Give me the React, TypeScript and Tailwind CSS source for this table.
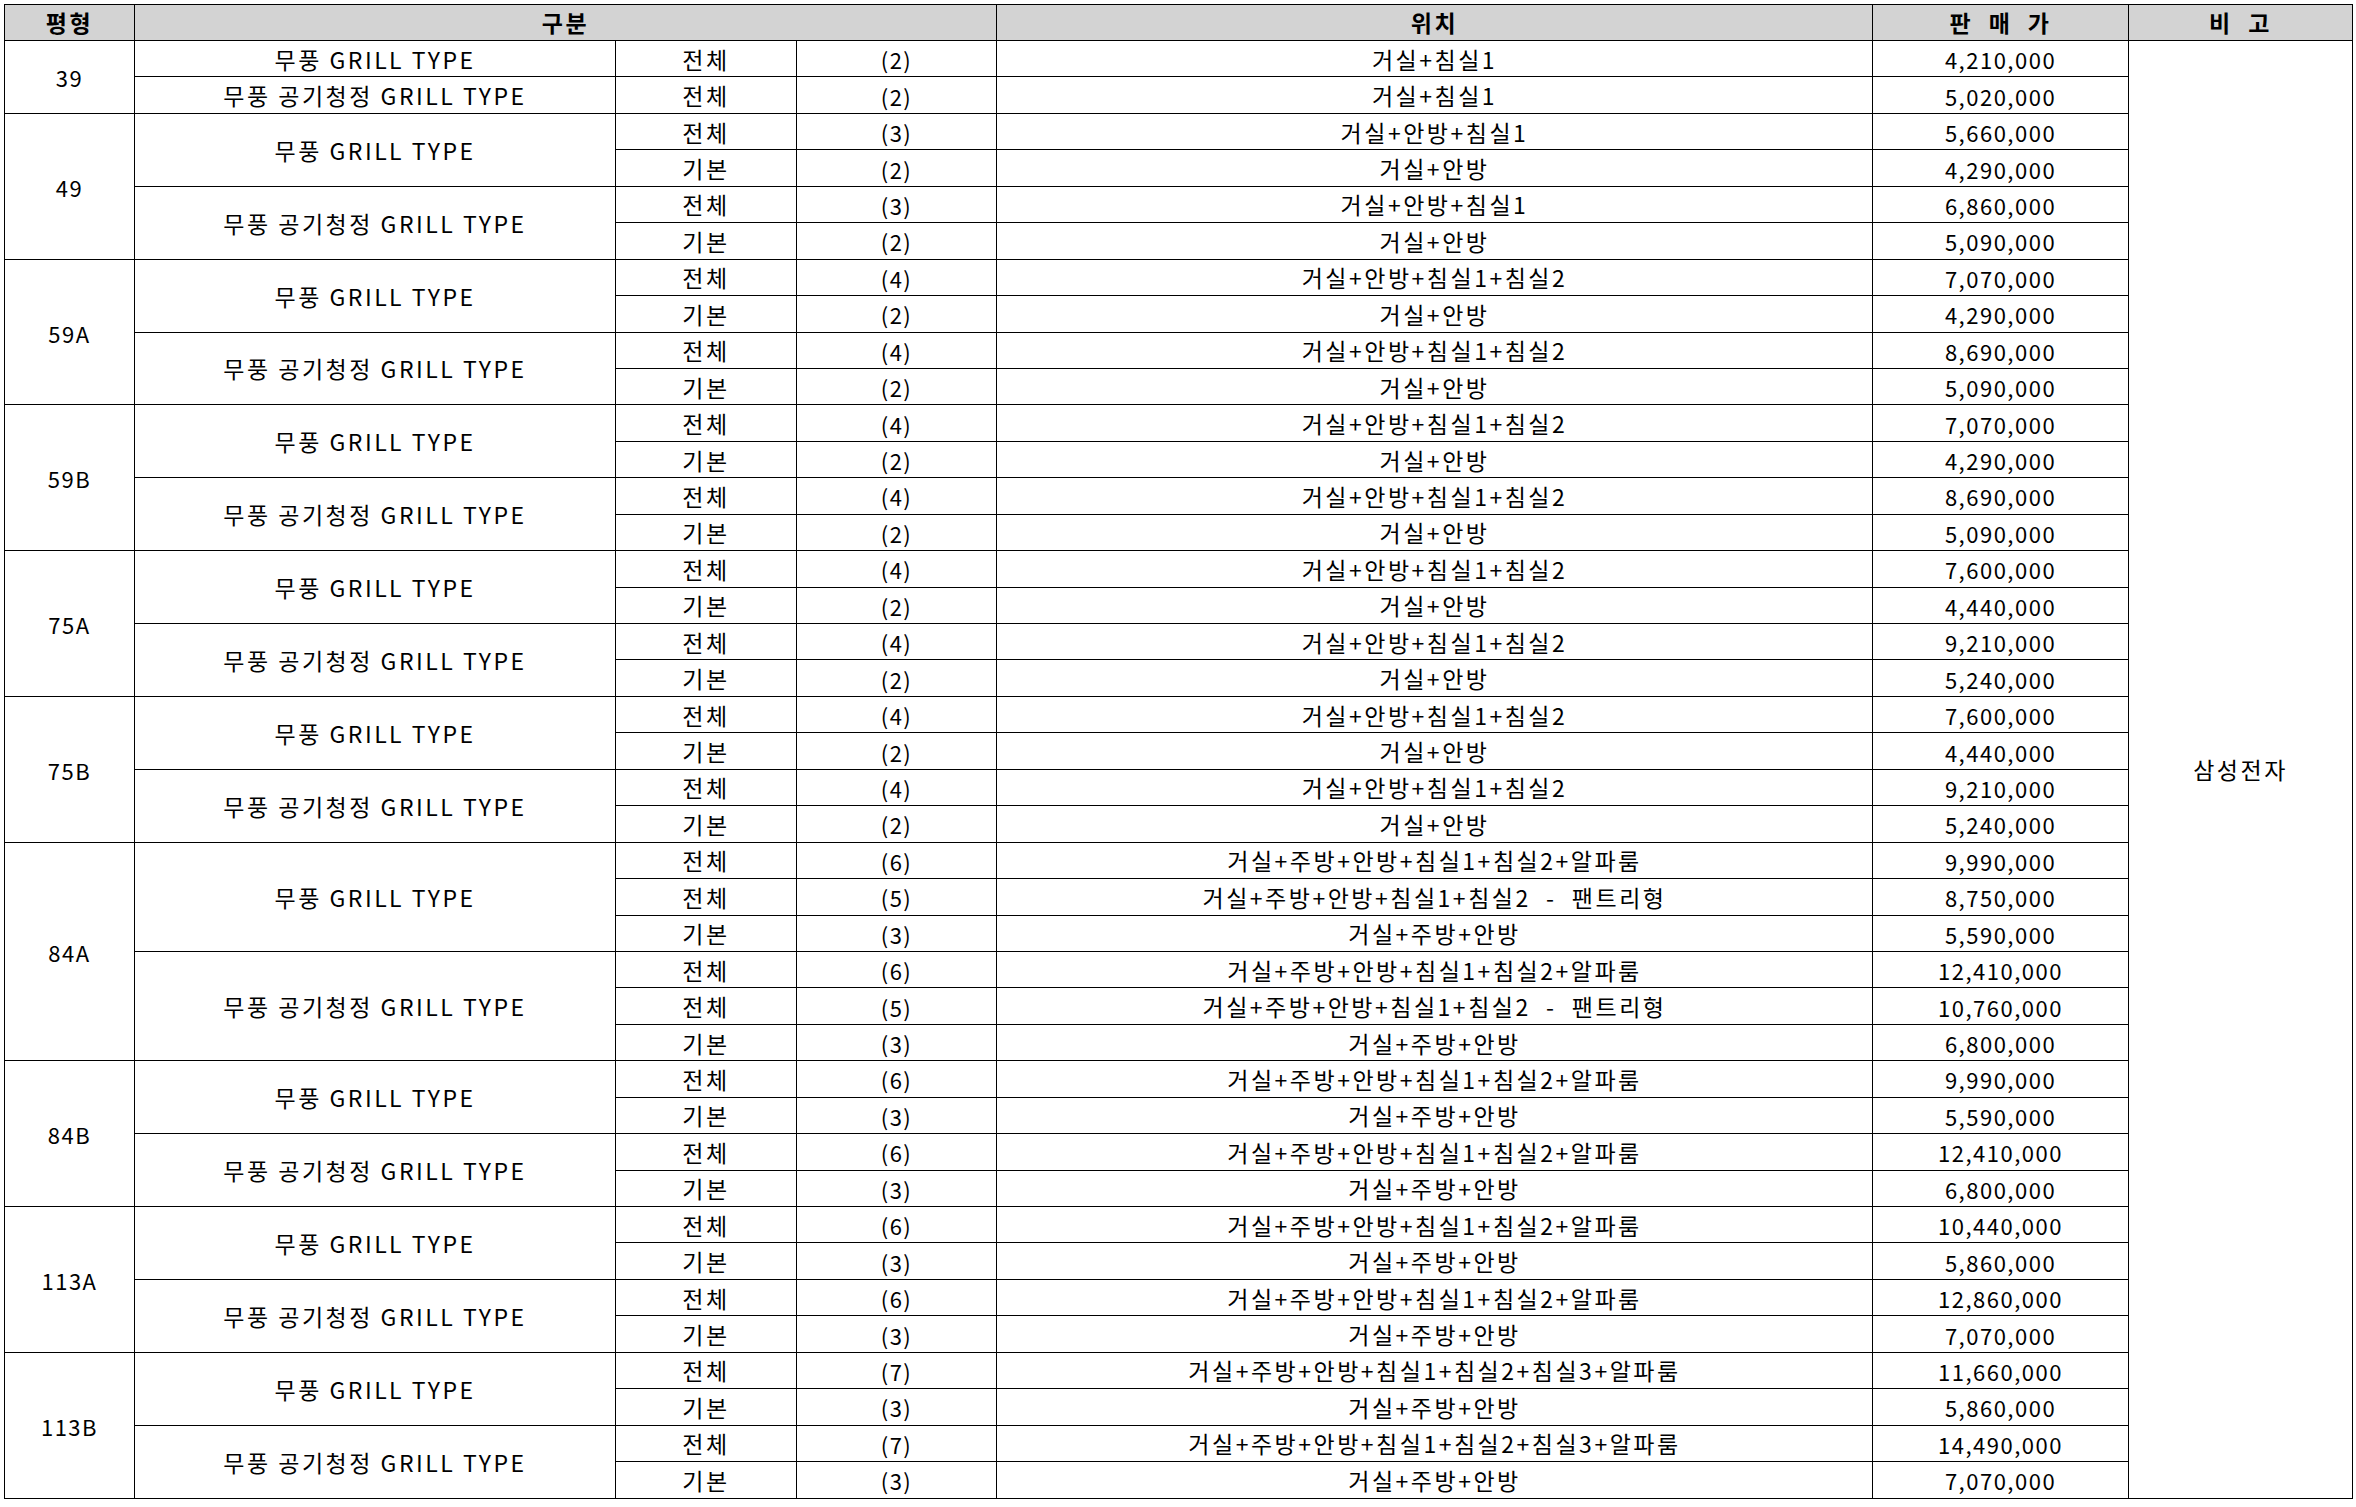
type Row = [string, string, string, string];
type TypeGroup = { name: string; rows: Row[] };
type SizeGroup = { size: string; types: TypeGroup[] };

const GRILL = "무풍 GRILL TYPE";
const AIR = "무풍 공기청정 GRILL TYPE";

const L1 = "거실+침실1";
const L2 = "거실+안방";
const L3 = "거실+안방+침실1";
const L4 = "거실+안방+침실1+침실2";
const K3 = "거실+주방+안방";
const K6 = "거실+주방+안방+침실1+침실2+알파룸";
const K5 = "거실+주방+안방+침실1+침실2  -  팬트리형";
const K7 = "거실+주방+안방+침실1+침실2+침실3+알파룸";

const data: SizeGroup[] = [
  {
    size: "39",
    types: [
      { name: GRILL, rows: [["전체", "(2)", L1, "4,210,000"]] },
      { name: AIR, rows: [["전체", "(2)", L1, "5,020,000"]] },
    ],
  },
  {
    size: "49",
    types: [
      { name: GRILL, rows: [["전체", "(3)", L3, "5,660,000"], ["기본", "(2)", L2, "4,290,000"]] },
      { name: AIR, rows: [["전체", "(3)", L3, "6,860,000"], ["기본", "(2)", L2, "5,090,000"]] },
    ],
  },
  {
    size: "59A",
    types: [
      { name: GRILL, rows: [["전체", "(4)", L4, "7,070,000"], ["기본", "(2)", L2, "4,290,000"]] },
      { name: AIR, rows: [["전체", "(4)", L4, "8,690,000"], ["기본", "(2)", L2, "5,090,000"]] },
    ],
  },
  {
    size: "59B",
    types: [
      { name: GRILL, rows: [["전체", "(4)", L4, "7,070,000"], ["기본", "(2)", L2, "4,290,000"]] },
      { name: AIR, rows: [["전체", "(4)", L4, "8,690,000"], ["기본", "(2)", L2, "5,090,000"]] },
    ],
  },
  {
    size: "75A",
    types: [
      { name: GRILL, rows: [["전체", "(4)", L4, "7,600,000"], ["기본", "(2)", L2, "4,440,000"]] },
      { name: AIR, rows: [["전체", "(4)", L4, "9,210,000"], ["기본", "(2)", L2, "5,240,000"]] },
    ],
  },
  {
    size: "75B",
    types: [
      { name: GRILL, rows: [["전체", "(4)", L4, "7,600,000"], ["기본", "(2)", L2, "4,440,000"]] },
      { name: AIR, rows: [["전체", "(4)", L4, "9,210,000"], ["기본", "(2)", L2, "5,240,000"]] },
    ],
  },
  {
    size: "84A",
    types: [
      {
        name: GRILL,
        rows: [
          ["전체", "(6)", K6, "9,990,000"],
          ["전체", "(5)", K5, "8,750,000"],
          ["기본", "(3)", K3, "5,590,000"],
        ],
      },
      {
        name: AIR,
        rows: [
          ["전체", "(6)", K6, "12,410,000"],
          ["전체", "(5)", K5, "10,760,000"],
          ["기본", "(3)", K3, "6,800,000"],
        ],
      },
    ],
  },
  {
    size: "84B",
    types: [
      { name: GRILL, rows: [["전체", "(6)", K6, "9,990,000"], ["기본", "(3)", K3, "5,590,000"]] },
      { name: AIR, rows: [["전체", "(6)", K6, "12,410,000"], ["기본", "(3)", K3, "6,800,000"]] },
    ],
  },
  {
    size: "113A",
    types: [
      { name: GRILL, rows: [["전체", "(6)", K6, "10,440,000"], ["기본", "(3)", K3, "5,860,000"]] },
      { name: AIR, rows: [["전체", "(6)", K6, "12,860,000"], ["기본", "(3)", K3, "7,070,000"]] },
    ],
  },
  {
    size: "113B",
    types: [
      { name: GRILL, rows: [["전체", "(7)", K7, "11,660,000"], ["기본", "(3)", K3, "5,860,000"]] },
      { name: AIR, rows: [["전체", "(7)", K7, "14,490,000"], ["기본", "(3)", K3, "7,070,000"]] },
    ],
  },
];

const totalRows = data.reduce(
  (n, g) => n + g.types.reduce((m, t) => m + t.rows.length, 0),
  0
);

const cell =
  "border border-black p-0 pt-[1px] text-center align-middle whitespace-pre leading-none text-[23px] tracking-[2.5px]";
const num =
  "border border-black p-0 pt-[1px] text-center align-middle whitespace-pre leading-none text-[22px] tracking-[1.5px]";
const head =
  "border border-black bg-[#d3d3d3] p-0 text-center align-middle font-bold text-[23px] leading-none tracking-[2.5px] whitespace-pre";

export default function App() {
  let first = true;
  return (
    <div className="min-h-screen bg-white pl-[4px] pt-[4px] text-black [font-family:'Noto_Sans_CJK_KR','Noto_Sans',sans-serif]">
      <table className="w-[2348px] table-fixed border-collapse">
        <colgroup>
          <col className="w-[130px]" />
          <col className="w-[481px]" />
          <col className="w-[181px]" />
          <col className="w-[200px]" />
          <col className="w-[876px]" />
          <col className="w-[256px]" />
          <col className="w-[224px]" />
        </colgroup>
        <thead>
          <tr className="h-[36px]">
            <th className={head}>평형</th>
            <th className={head} colSpan={3}>
              구분
            </th>
            <th className={head}>위치</th>
            <th className={head}>판  매  가</th>
            <th className={head}>비  고</th>
          </tr>
        </thead>
        <tbody>
          {data.map((g) => {
            const sizeSpan = g.types.reduce((m, t) => m + t.rows.length, 0);
            return g.types.map((t, ti) =>
              t.rows.map((r, ri) => {
                const isFirst = first;
                first = false;
                return (
                  <tr key={`${g.size}-${ti}-${ri}`} className="h-[36.45px]">
                    {ti === 0 && ri === 0 && (
                      <td className={num} rowSpan={sizeSpan}>
                        {g.size}
                      </td>
                    )}
                    {ri === 0 && (
                      <td className={cell} rowSpan={t.rows.length}>
                        {t.name}
                      </td>
                    )}
                    <td className={cell}>{r[0]}</td>
                    <td className={num}>{r[1]}</td>
                    <td className={cell}>{r[2]}</td>
                    <td className={num}>{r[3]}</td>
                    {isFirst && (
                      <td className={cell} rowSpan={totalRows}>
                        삼성전자
                      </td>
                    )}
                  </tr>
                );
              })
            );
          })}
        </tbody>
      </table>
    </div>
  );
}
